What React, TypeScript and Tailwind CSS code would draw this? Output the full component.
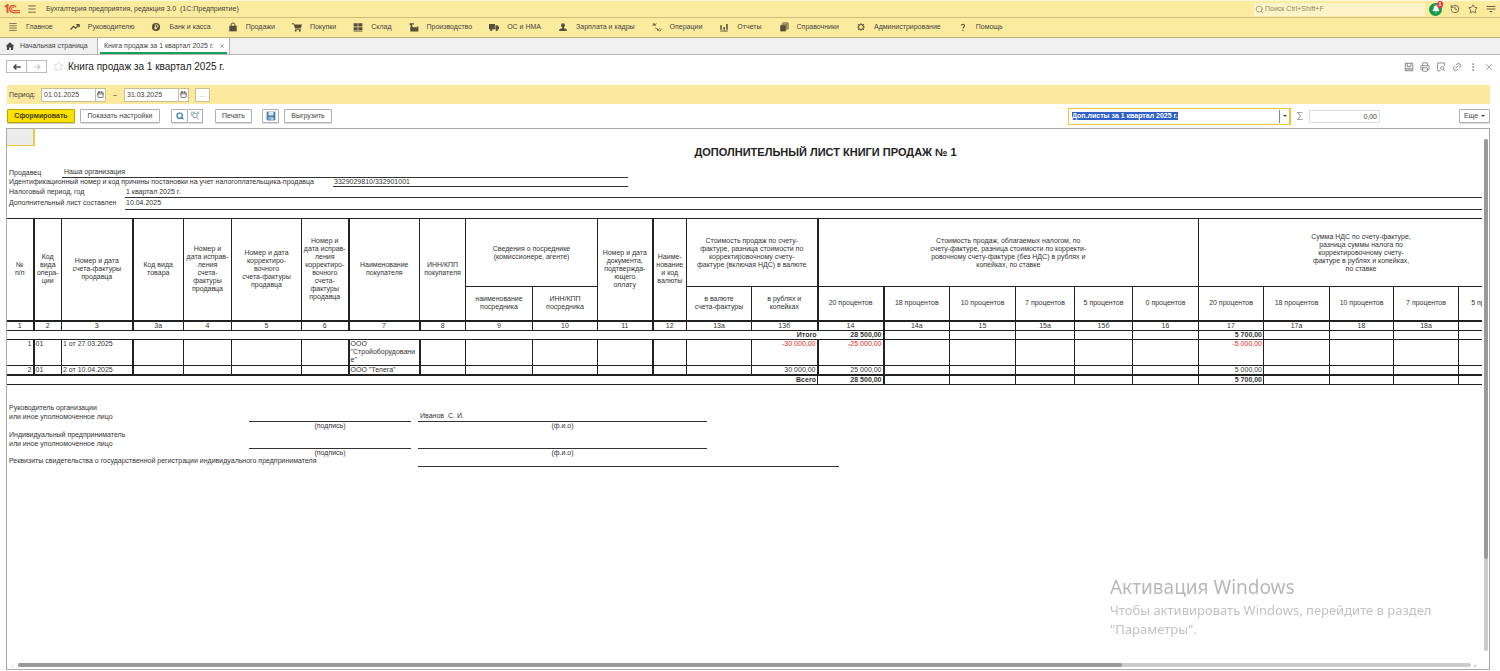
import type { ReactNode } from "react";
import {
  Bell,
  Calendar,
  History,
  Link2,
  MoreVertical,
  Printer,
  Search,
  Star,
  X,
} from "lucide-react";

function Glyph({ children, className = "" }: { children: ReactNode; className?: string }) {
  return (
    <svg
      aria-hidden="true"
      className={`h-[10px] w-[10px] shrink-0 ${className}`}
      fill="currentColor"
      viewBox="0 0 16 16"
    >
      {children}
    </svg>
  );
}

const menuItems: { label: string; icon: ReactNode }[] = [
  {
    label: "Главное",
    icon: (
      <path
        d="M2 2.5h12M2 6.2h12M2 9.8h12M2 13.5h12"
        fill="none"
        stroke="currentColor"
        strokeWidth="1.2"
      />
    ),
  },
  {
    label: "Руководителю",
    icon: (
      <path
        d="M1 12l4.5-5 3.5 3 5-5.5M10 4h4.5v4.5"
        fill="none"
        stroke="currentColor"
        strokeWidth="2"
      />
    ),
  },
  {
    label: "Банк и касса",
    icon: (
      <>
        <circle cx="8" cy="8" r="6.5" />
        <path
          d="M7 12V4.5h2.2a2 2 0 010 4.2H5.5M5.5 10.4h4"
          fill="none"
          stroke="#fbeb9e"
          strokeWidth="1.3"
        />
      </>
    ),
  },
  {
    label: "Продажи",
    icon: (
      <>
        <path d="M2 6h12v9H2z" />
        <path d="M5 7V4.5a3 3 0 016 0V7" fill="none" stroke="currentColor" strokeWidth="1.6" />
      </>
    ),
  },
  {
    label: "Покупки",
    icon: (
      <>
        <path d="M0 2h3l1 2h12l-2 6.5H5L2.5 3.5H0zM5 11h9v1.200H5z" />
        <circle cx="6" cy="14" r="1.5" />
        <circle cx="12.5" cy="14" r="1.5" />
      </>
    ),
  },
  {
    label: "Склад",
    icon: (
      <path d="M1 2h6.5v5H1zM8.5 2H15v5H8.5zM1 8.5h6.5V13H1zM8.5 8.5H15V13H8.5zM1 14h14v1H1z" />
    ),
  },
  {
    label: "Производство",
    icon: <path d="M2 15V7h1V5H1V2h7v2H5v3l4 2V7l3 2 0.5-2H15v8z" />,
  },
  {
    label: "ОС и НМА",
    icon: (
      <>
        <path d="M0 3h9.5v8.5H0zM10.3 5h3l2.7 3v3.5h-5.7z" />
        <circle cx="3.5" cy="12.5" r="1.9" />
        <circle cx="12.3" cy="12.5" r="1.9" />
      </>
    ),
  },
  {
    label: "Зарплата и кадры",
    icon: (
      <>
        <circle cx="8" cy="5" r="3.2" />
        <path d="M6.5 7h3v3l4.5 1.5v3H2v-3L6.5 10z" />
      </>
    ),
  },
  {
    label: "Операции",
    icon: (
      <path
        d="M1 6l2-4 1.500 4L7 2M2 4.500h3M5 9l4 3M9 10.500v4M10 12.500l2.500-2M10 12.500l2.500 2M15 10.500l-2 4"
        fill="none"
        stroke="currentColor"
        strokeWidth="1.2"
      />
    ),
  },
  {
    label: "Отчеты",
    icon: <path d="M2 5h2.5v7.5H2zM7 8h2.500v4.500H7zM11.500 3H14v9.500h-2.500zM2 13.500h12V15H2z" />,
  },
  {
    label: "Справочники",
    icon: (
      <>
        <path d="M2 5h9v10H2z" />
        <path d="M4 3.500h8.500V13M5.500 1.500H14.500V11.500" fill="none" stroke="currentColor" strokeWidth="1.4" />
      </>
    ),
  },
  {
    label: "Администрирование",
    icon: (
      <>
        <circle cx="8" cy="8" fill="none" r="4" stroke="currentColor" strokeWidth="1.6" />
        <path
          d="M8 2v2M8 12v2M2 8h2M12 8h2M3.500 3.500l2 2M10.500 10.500l2 2M3.500 12.500l2-2M10.500 5.500l2-2"
          stroke="currentColor"
          strokeWidth="1.8"
        />
      </>
    ),
  },
  {
    label: "Помощь",
    icon: (
      <path
        d="M5.500 6a2.500 2.500 0 115 0c0 2-2.500 2-2.500 4.500M8 12.500v2"
        fill="none"
        stroke="currentColor"
        strokeWidth="1.7"
      />
    ),
  },
];

// Column widths of the printed form, in order
const columns = [
  "w-[27px]",
  "w-[28px]",
  "w-[71px]",
  "w-[51px]",
  "w-[48px]",
  "w-[70px]",
  "w-[47px]",
  "w-[71px]",
  "w-[46px]",
  "w-[67px]",
  "w-[65px]",
  "w-[55px]",
  "w-[34px]",
  "w-[65px]",
  "w-[66px]",
  "w-[66px]",
  "w-[66px]",
  "w-[66px]",
  "w-[59px]",
  "w-[58px]",
  "w-[66px]",
  "w-[65px]",
  "w-[66px]",
  "w-[64px]",
  "w-[65px]",
  "w-[65px]",
];

const codes = [
  "1", "2", "3", "3а", "4", "5", "6", "7", "8", "9", "10", "11", "12",
  "13а", "13б", "14", "14а", "15", "15а", "15б", "16", "17", "17а", "18", "18а", "18б",
];

const heavyColumns = [1, 3, 7, 8, 12, 15, 16];

const entries = [
  {
    number: "1",
    kind: "01",
    invoice: "1 от 27.03.2025",
    buyer: ["ООО", "\"Стройоборудовани", "е\""],
    total: "-30 000,00",
    base: "-25 000,00",
    tax: "-5 000,00",
  },
  {
    number: "2",
    kind: "01",
    invoice: "2 от 10.04.2025",
    buyer: ["ООО \"Телега\""],
    total: "30 000,00",
    base: "25 000,00",
    tax: "5 000,00",
  },
];

function Lines({ rows }: { rows: string[] }) {
  return (
    <>
      {rows.map((row) => (
        <span className="block whitespace-nowrap" key={row}>
          {row}
        </span>
      ))}
    </>
  );
}

function HeadCell({ rows, heavy = false }: { rows: string[]; heavy?: boolean }) {
  return (
    <th
      className={`border border-b-2 border-[#222] p-0 font-normal ${heavy ? "border-l-2" : ""}`}
      rowSpan={2}
    >
      <Lines rows={rows} />
    </th>
  );
}

function GroupCell({ rows, span, heavy = false }: { rows: string[]; span: number; heavy?: boolean }) {
  return (
    <th
      className={`border border-[#222] p-0 font-normal ${heavy ? "border-l-2" : ""}`}
      colSpan={span}
    >
      <Lines rows={rows} />
    </th>
  );
}

const subHeads = [
  ["наименование", "посредника"],
  ["ИНН/КПП", "посредника"],
  ["в валюте", "счета-фактуры"],
  ["в рублях и", "копейках"],
  ["20 процентов"],
  ["18 процентов"],
  ["10 процентов"],
  ["7 процентов"],
  ["5 процентов"],
  ["0 процентов"],
  ["20 процентов"],
  ["18 процентов"],
  ["10 процентов"],
  ["7 процентов"],
  ["5 процентов"],
];

function SummaryRow({
  label,
  base,
  tax,
  last = false,
}: {
  label: string;
  base: string;
  tax: string;
  last?: boolean;
}) {
  return (
    <tr className="h-[9px] font-bold">
      <td
        className={`border-y border-[#222] p-0 pr-px text-right ${last ? "border-r" : ""}`}
        colSpan={15}
      >
        {label}
      </td>
      {codes.slice(15).map((code) => (
        <td
          className={`border-y border-r border-[#222] p-0 pr-px text-right ${
            code === "14" ? "border-r-2" : ""
          }`}
          key={code}
        >
          {code === "14" ? base : code === "17" ? tax : ""}
        </td>
      ))}
    </tr>
  );
}

function SalesTable() {
  return (
    <table className="w-[1517px] table-fixed border-collapse">
      <colgroup>
        {columns.map((width, index) => (
          <col className={width} key={index} />
        ))}
      </colgroup>
      <thead>
        <tr className="h-[68px]">
          <HeadCell rows={["№", "п/п"]} />
          <HeadCell heavy rows={["Код", "вида", "опера-", "ции"]} />
          <HeadCell rows={["Номер и дата", "счета-фактуры", "продавца"]} />
          <HeadCell heavy rows={["Код вида", "товара"]} />
          <HeadCell rows={["Номер и", "дата исправ-", "ления", "счета-", "фактуры", "продавца"]} />
          <HeadCell rows={["Номер и дата", "корректиро-", "вочного", "счета-фактуры", "продавца"]} />
          <HeadCell
            rows={[
              "Номер и",
              "дата исправ-",
              "ления",
              "корректиро-",
              "вочного",
              "счета-",
              "фактуры",
              "продавца",
            ]}
          />
          <HeadCell heavy rows={["Наименование", "покупателя"]} />
          <HeadCell rows={["ИНН/КПП", "покупателя"]} />
          <GroupCell rows={["Сведения о посреднике", "(комиссионере, агенте)"]} span={2} />
          <HeadCell rows={["Номер и дата", "документа,", "подтвержда-", "ющего", "оплату"]} />
          <HeadCell heavy rows={["Наиме-", "нование", "и код", "валюты"]} />
          <GroupCell
            rows={[
              "Стоимость продаж по счету-",
              "фактуре, разница стоимости по",
              "корректировочному счету-",
              "фактуре (включая НДС) в валюте",
            ]}
            span={2}
          />
          <GroupCell
            heavy
            rows={[
              "Стоимость продаж, облагаемых налогом, по",
              "счету-фактуре, разница стоимости по корректи-",
              "ровочному счету-фактуре (без НДС) в рублях и",
              "копейках, по ставке",
            ]}
            span={6}
          />
          <GroupCell
            rows={[
              "Сумма НДС по счету-фактуре,",
              "разница суммы налога по",
              "корректировочному счету-",
              "фактуре в рублях и копейках,",
              "по ставке",
            ]}
            span={5}
          />
        </tr>
        <tr className="h-[34px]">
          {subHeads.map((rows, index) => (
            <th
              className={`border border-b-2 border-[#222] p-0 font-normal ${
                index === 4 || index === 5 ? "border-l-2" : ""
              }`}
              key={index}
            >
              <Lines rows={rows} />
            </th>
          ))}
        </tr>
        <tr className="h-[9px]">
          {codes.map((code, index) => (
            <th
              className={`border border-t-2 border-[#222] p-0 font-normal ${
                heavyColumns.includes(index) ? "border-l-2" : ""
              }`}
              key={code}
            >
              {code}
            </th>
          ))}
        </tr>
      </thead>
      <tbody>
        <SummaryRow base="28 500,00" label="Итого" tax="5 700,00" />
        {entries.map((entry, row) => (
          <tr className={row === 0 ? "h-[26px]" : "h-[9px]"} key={entry.number}>
            {codes.map((code, index) => {
              const amount =
                code === "13б" ? entry.total : code === "14" ? entry.base : code === "17" ? entry.tax : "";

              return (
                <td
                  className={`border border-[#222] p-0 px-px align-top ${
                    heavyColumns.includes(index) ? "border-l-2" : ""
                  } ${row === 1 ? "border-b-2" : ""} ${
                    amount || index === 0 ? "text-right" : ""
                  } ${amount.startsWith("-") ? "text-[#f02020]" : ""}`}
                  key={code}
                >
                  {index === 0 && entry.number}
                  {index === 1 && entry.kind}
                  {index === 2 && entry.invoice}
                  {index === 7 && <Lines rows={entry.buyer} />}
                  {amount}
                </td>
              );
            })}
          </tr>
        ))}
        <SummaryRow base="28 500,00" label="Всего" last tax="5 700,00" />
      </tbody>
    </table>
  );
}

function SignatureRow({ title, name }: { title: string; name: string }) {
  return (
    <div className="grid h-[27px] grid-cols-[242px_162px_296px]">
      <p className="pl-[2px] leading-[9px]">
        {title}
        <br />
        или иное уполномоченное лицо
      </p>
      <div className="text-center">
        <div className="h-[19px] border-b border-[#333]" />
        (подпись)
      </div>
      <div className="ml-[7px] text-center">
        <div className="flex h-[19px] items-end border-b border-[#333] pb-px pl-[2px] whitespace-pre">
          {name}
        </div>
        (ф.и.о)
      </div>
    </div>
  );
}

function Sheet() {
  return (
    <div className="w-[1637px] text-[7px] leading-[8px] text-[#333]">
      <div className="h-[17px] w-[28px] border-r-2 border-b border-[#e6ca48] bg-[#ececec]" />
      <h2 className="text-center text-[11px] leading-[12px] font-bold text-[#222]">
        ДОПОЛНИТЕЛЬНЫЙ ЛИСТ КНИГИ ПРОДАЖ № 1
      </h2>
      <dl className="mt-[10px] pl-[2px]">
        <div className="flex h-[10px] w-[619px]">
          <dt className="w-[53px] pt-px">Продавец</dt>
          <dd className="flex-1 border-b border-[#333] pl-[2px]">Наша организация</dd>
        </div>
        <div className="flex h-[9px] w-[619px]">
          <dt className="w-[324px]">
            Идентификационный номер и код причины постановки на учет налогоплательщика-продавца
          </dt>
          <dd className="flex-1 border-b border-[#333] pl-px">3329029810/332901001</dd>
        </div>
        <div className="flex h-[11px]">
          <dt className="w-[116px] pt-px">Налоговый период, год</dt>
          <dd className="flex-1 border-b border-[#333] pt-px pl-px">1 квартал 2025 г.</dd>
        </div>
        <div className="flex h-[12px]">
          <dt className="w-[116px] pt-px">Дополнительный лист составлен</dt>
          <dd className="flex-1 border-b border-[#333] pt-px pl-px">10.04.2025</dd>
        </div>
      </dl>

      <div className="mt-[8px] -ml-px">
        <SalesTable />
      </div>

      <div className="mt-[18px]">
        <SignatureRow name="Иванов  С. И." title="Руководитель организации" />
        <SignatureRow name="" title="Индивидуальный предприниматель" />
        <div className="flex h-[10px]">
          <p className="w-[411px] pl-[2px]">
            Реквизиты свидетельства о государственной регистрации индивидуального предпринимателя
          </p>
          <div className="w-[421px] border-b border-[#333]" />
        </div>
      </div>
    </div>
  );
}

function DateField({ label, value }: { label: string; value: string }) {
  return (
    <div className="flex h-[14px] w-[65px] border border-[#c9bf96] bg-white">
      <input
        aria-label={label}
        className="w-0 flex-1 pl-[2px] leading-[11px] outline-none"
        defaultValue={value}
        type="text"
      />
      <button
        aria-label="Выбрать дату"
        className="flex w-[10px] items-center justify-center border-l border-[#c9bf96]"
        type="button"
      >
        <Calendar className="h-[7px] w-[7px]" strokeWidth={2.5} />
      </button>
    </div>
  );
}

const buttonClass =
  "flex h-[14px] shrink-0 items-center justify-center rounded-[1px] border border-[#b0b0b0] bg-white shadow-[0_1px_0_#ddd]";

function Toolbar() {
  return (
    <div className="flex h-[24px] items-center pr-[10px] pl-[7px]">
      <button
        className="flex h-[14px] w-[68px] items-center justify-center rounded-[1px] border border-[#c2a600] bg-[#fbe000] font-bold text-[#4a4000] shadow-[0_1px_0_#ccc]"
        type="button"
      >
        Сформировать
      </button>
      <button className={`${buttonClass} ml-[5px] w-[80px]`} type="button">
        Показать настройки
      </button>
      <button aria-label="Найти" className={`${buttonClass} ml-[11px] w-[17px]`} type="button">
        <Search className="h-[8px] w-[8px] text-[#2f78b4]" strokeWidth={3.5} />
      </button>
      <button
        aria-label="Отменить поиск"
        className={`${buttonClass} w-[15px] border-l-0 text-[#9bb5bd]`}
        type="button"
      >
        <Glyph>
          <circle cx="8" cy="7" fill="none" r="3.5" stroke="currentColor" strokeWidth="1.8" />
          <path
            d="M10.500 9.500l3.500 5M2 2h6M2 2v6M11 1l4 4M15 1l-4 4"
            fill="none"
            stroke="currentColor"
            strokeWidth="1.6"
          />
        </Glyph>
      </button>
      <button className={`${buttonClass} ml-[12px] w-[37px]`} type="button">
        Печать
      </button>
      <button
        aria-label="Сохранить"
        className={`${buttonClass} ml-[10px] w-[17px] text-[#4d7ea8]`}
        type="button"
      >
        <Glyph>
          <path d="M1 1h14v14H1z" />
          <path d="M4 1h8v6H4z" fill="#d9ebf7" />
          <path d="M4 10h8v5H4z" fill="#b9d3e6" />
          <path d="M5.5 11.5h2V15h-2z" />
        </Glyph>
      </button>
      <button className={`${buttonClass} ml-[5px] w-[48px]`} type="button">
        Выгрузить
      </button>

      <div className="ml-auto flex h-[17px] w-[223px] items-center border border-r-2 border-[#efc52f] bg-white pl-[3px]">
        <select
          aria-label="Раздел отчета"
          className="field-sizing-content h-[8px] appearance-none bg-[#2f60c8] p-0 leading-[8px] font-bold text-white outline-none"
        >
          <option>Доп.листы за 1 квартал 2025 г.</option>
        </select>
        <div className="ml-auto flex h-[13px] w-[10px] items-center justify-center border-l border-[#888]">
          <svg aria-hidden="true" className="h-[2px] w-[4px]" viewBox="0 0 4 2">
            <path d="M0 0h4L2 2z" fill="#444" />
          </svg>
        </div>
      </div>
      <span aria-hidden="true" className="w-[18px] text-center text-[11px] leading-[14px] text-[#999]">
        Σ
      </span>
      <input
        aria-label="Сумма"
        className="h-[13px] w-[71px] border border-[#ddd] pr-[2px] text-right"
        defaultValue="0,00"
        type="text"
      />
      <button className={`${buttonClass} ml-[79px] w-[31px] gap-[3px]`} type="button">
        Еще
        <svg aria-hidden="true" className="h-[2px] w-[4px]" viewBox="0 0 4 2">
          <path d="M0 0h4L2 2z" fill="#444" />
        </svg>
      </button>
    </div>
  );
}

function TitleBar() {
  return (
    <header className="flex h-[18px] items-center border-t border-b border-t-[#fdf8dc] border-b-[#cdbc7c] bg-[#fbeb9e] pr-[4px] pl-[4px]">
      <div aria-label="1С" className="flex w-[17px] items-center text-[#e0563c]" role="img">
        <svg className="h-[10px] w-[17px]" fill="none" stroke="currentColor" viewBox="0 0 34 20">
          <path d="M2 6l5-4v16" strokeWidth="4" />
          <path d="M24 6a7 7 0 10-6 11h14" strokeWidth="3" />
          <path d="M20 8a3 3 0 10-2 5h14" strokeWidth="2" />
        </svg>
      </div>
      <button aria-label="Главное меню" className="ml-[6px] text-[#6d6545]" type="button">
        <Glyph>
          <path d="M2 3h12M2 8h12M2 13h12" stroke="currentColor" strokeWidth="1.5" />
        </Glyph>
      </button>
      <h1 className="ml-[9px] text-[7px] whitespace-pre">
        Бухгалтерия предприятия, редакция 3.0  (1С:Предприятие)
      </h1>
      <label className="ml-auto flex h-[13px] w-[171px] items-center gap-px bg-[#fdf5c9] pl-px text-[#8d8769]">
        <Search className="h-[9px] w-[9px]" strokeWidth={2} />
        <input
          aria-label="Поиск"
          className="w-0 flex-1 outline-none placeholder:text-[#8d8769]"
          placeholder="Поиск Ctrl+Shift+F"
          type="search"
        />
      </label>
      <div className="ml-[4px] flex items-center gap-[8px] text-[#5d573f]">
        <button
          aria-label="Уведомления"
          className="relative flex h-[13px] w-[13px] items-center justify-center rounded-full bg-[#159a4c] text-white"
          type="button"
        >
          <Bell className="h-[8px] w-[8px]" fill="currentColor" />
          <span className="absolute -top-[2px] -right-[1px] h-[7px] w-[6px] rounded-full bg-[#e8323c] text-[6px] leading-[7px] font-bold">
            1
          </span>
        </button>
        <button aria-label="История" type="button">
          <History className="h-[10px] w-[10px]" />
        </button>
        <button aria-label="Избранное" type="button">
          <Star className="h-[10px] w-[10px]" />
        </button>
        <button aria-label="Настройки" type="button">
          <Glyph>
            <path d="M1 4h14M1 8h14" stroke="currentColor" strokeWidth="1.5" />
            <path d="M5.500 11h5l-2.500 3z" />
          </Glyph>
        </button>
      </div>
    </header>
  );
}

export default function App() {
  return (
    <div className="flex min-h-screen flex-col bg-white font-['Liberation_Sans',Arial,sans-serif] text-[7px] leading-[10px] text-[#444]">
      <TitleBar />

      <nav className="flex h-[20px] items-center gap-[17px] border-b border-[#bfb075] bg-[#fbeb9e] pb-px pl-[8px]">
        {menuItems.map((item) => (
          <a className="flex items-center gap-[8px] whitespace-nowrap" href="#" key={item.label}>
            <Glyph className="text-[#55503c]">{item.icon}</Glyph>
            {item.label}
          </a>
        ))}
      </nav>

      <div className="flex h-[17px] border-b border-[#b5b5b5] bg-[#f0f0f0]">
        <a
          className="flex w-[98px] items-center gap-[5px] border-r border-[#b5b5b5] pl-[5px]"
          href="#"
        >
          <Glyph>
            <path d="M8 2L1 8.500h2V14.500h3.500v-4h3v4H13V8.500h2z" />
          </Glyph>
          Начальная страница
        </a>
        <div className="flex w-[132px] border-r border-[#b5b5b5] bg-white px-[2px]">
          <div className="flex flex-1 items-center justify-between border-b-2 border-[#14a05a] pt-px pr-[2px] pl-[4px]">
            <a href="#">Книга продаж за 1 квартал 2025 г.</a>
            <button aria-label="Закрыть вкладку" type="button">
              <X className="h-[6px] w-[6px]" />
            </button>
          </div>
        </div>
      </div>

      <div className="flex h-[23px] items-center pr-[6px] pl-[6px]">
        <div className="flex h-[13px] w-[41px] border border-[#bbb] bg-white">
          <button
            aria-label="Назад"
            className="flex flex-1 items-center justify-center border-r border-[#bbb]"
            type="button"
          >
            <Glyph>
              <path
                d="M7 4L3 8l4 4M3 8h11"
                fill="none"
                stroke="currentColor"
                strokeWidth="2.2"
              />
            </Glyph>
          </button>
          <button
            aria-label="Вперед"
            className="flex flex-1 items-center justify-center text-[#ccc]"
            type="button"
          >
            <Glyph>
              <path
                d="M9 4l4 4-4 4M13 8H2"
                fill="none"
                stroke="currentColor"
                strokeWidth="1.8"
              />
            </Glyph>
          </button>
        </div>
        <button aria-label="В избранное" className="ml-[6px] text-[#ccc]" type="button">
          <Star className="h-[11px] w-[11px]" strokeWidth={1.5} />
        </button>
        <h2 className="ml-[4px] text-[10px] leading-[12px] text-[#222]">
          Книга продаж за 1 квартал 2025 г.
        </h2>
        <div className="ml-auto flex items-center gap-[6px] text-[#777]">
          <button aria-label="Сохранить" type="button">
            <Glyph>
              <path
                d="M2 2h12v12H2zM5 2v5h6V2M4.500 14v-4h7v4M7 12h2"
                fill="none"
                stroke="currentColor"
                strokeWidth="1.4"
              />
            </Glyph>
          </button>
          <button aria-label="Печать" type="button">
            <Printer className="h-[10px] w-[10px]" />
          </button>
          <button aria-label="Просмотр" type="button">
            <Glyph>
              <path
                d="M7 14H2.500V1.500h11V6M14.500 14.500l-2.500-2.500"
                fill="none"
                stroke="currentColor"
                strokeWidth="1.3"
              />
              <circle cx="10" cy="10" fill="none" r="2.5" stroke="currentColor" strokeWidth="1.3" />
            </Glyph>
          </button>
          <button aria-label="Ссылка" type="button">
            <Link2 className="h-[10px] w-[10px] -rotate-45" />
          </button>
          <button aria-label="Еще действия" type="button">
            <MoreVertical className="h-[10px] w-[10px]" />
          </button>
          <button aria-label="Закрыть" type="button">
            <X className="h-[10px] w-[10px]" strokeWidth={1.5} />
          </button>
        </div>
      </div>

      <div className="mt-[7px] mr-[10px] ml-[7px] flex h-[19px] items-center bg-[#fbe99e] pl-[2px]">
        <span className="w-[32px]">Период:</span>
        <DateField label="Начало периода" value="01.01.2025" />
        <span className="w-[18px] text-center">–</span>
        <DateField label="Конец периода" value="31.03.2025" />
        <button
          aria-label="Выбрать период"
          className="ml-[6px] flex h-[14px] w-[15px] items-center justify-center border border-[#c9bf96] bg-white text-[#999]"
          type="button"
        >
          ...
        </button>
      </div>

      <Toolbar />

      <main className="mr-[10px] mb-px ml-[6px] flex flex-1 flex-col border border-[#aaa]">
        <div className="flex flex-1">
          <div className="w-0 flex-1 overflow-hidden">
            <Sheet />
          </div>
          <div className="flex w-[7px] flex-col items-center pt-[10px] pb-[10px]">
            <div className="flex w-[4px] flex-1 flex-col rounded-full bg-[#ccc]">
              <div className="h-[82%] rounded-full bg-[#999]" />
            </div>
          </div>
        </div>
        <div className="flex h-[8px] items-center gap-[3px] pr-[12px] pl-[5px]">
          <span className="w-[3px] text-[5px] leading-[6px] text-[#999]">‹</span>
          <div className="h-[4px] flex-1 rounded-full bg-[#ccc]">
            <div className="h-full w-[76%] rounded-full bg-[#999]" />
          </div>
          <span className="w-[3px] text-[5px] leading-[6px]">›</span>
        </div>
      </main>

      <aside className="pointer-events-none fixed right-[62px] bottom-[32px] w-[328px] font-['Noto_Sans',sans-serif] text-[13px] leading-[19px] text-[#c2c2c2]">
        <p className="text-[19px] leading-[27px] text-[#b8b8b8]">Активация Windows</p>
        <p className="whitespace-nowrap">Чтобы активировать Windows, перейдите в раздел</p>
        <p>"Параметры".</p>
      </aside>
    </div>
  );
}
